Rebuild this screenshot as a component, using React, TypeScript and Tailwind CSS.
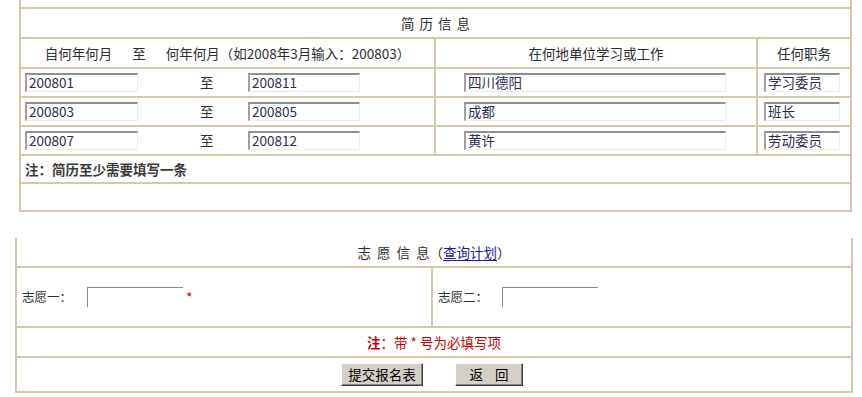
import React from 'react';

const line = 'border-[#d5c9a7]';

function Field({ value, w }: { value: string; w: string }) {
    return (
        <div
            className={`${w} h-[19px] flex items-center pl-[2px] bg-white border-t-2 border-l-2 border-t-[#8f8f8f] border-l-[#a0a0a0] border-b border-r border-b-[#ececec] border-r-[#ececec] text-[13.5px] text-[#2b2a55] leading-none`}
        >
            {value}
        </div>
    );
}

const resume = [
    { from: '200801', to: '200811', place: '四川德阳', role: '学习委员' },
    { from: '200803', to: '200805', place: '成都', role: '班长' },
    { from: '200807', to: '200812', place: '黄许', role: '劳动委员' },
];

export default function App() {
    return (
        <div className="w-[862px] h-[397px] bg-white text-[13.5px] text-[#2e2e2e] font-['Noto_Sans_CJK_SC',sans-serif] overflow-hidden">
            {/* 简历信息 */}
            <div className={`ml-[19px] w-[833px] border-l-2 border-r-2 border-b-2 ${line}`}>
                <div className={`h-[9px] border-b-2 ${line}`} />
                <div className={`h-[30px] flex items-center justify-center gap-[5px] border-b-2 ${line}`}>
                    <span>简</span>
                    <span>历</span>
                    <span>信</span>
                    <span>息</span>
                </div>
                <div className={`h-[30px] flex border-b-2 ${line}`}>
                    <div className={`w-[415px] flex items-center justify-center gap-[20px] border-r-2 ${line}`}>
                        <span>自何年何月</span>
                        <span>至</span>
                        <span>何年何月（如2008年3月输入：200803）</span>
                    </div>
                    <div className={`w-[322px] flex items-center justify-center border-r-2 ${line}`}>在何地单位学习或工作</div>
                    <div className="flex-1 flex items-center justify-center">任何职务</div>
                </div>
                {resume.map((r) => (
                    <div key={r.from} className={`h-[29px] flex border-b-2 ${line}`}>
                        <div className={`w-[415px] flex items-center pl-[4px] border-r-2 ${line}`}>
                            <Field value={r.from} w="w-[113px]" />
                            <span className="ml-[62px] w-[14px]">至</span>
                            <span className="ml-[34px]">
                                <Field value={r.to} w="w-[112px]" />
                            </span>
                        </div>
                        <div className={`w-[322px] flex items-center pl-[28px] border-r-2 ${line}`}>
                            <Field value={r.place} w="w-[262px]" />
                        </div>
                        <div className="flex-1 flex items-center pl-[6px]">
                            <Field value={r.role} w="w-[76px]" />
                        </div>
                    </div>
                ))}
                <div className={`h-[28px] flex items-center pl-[4px] font-bold text-[#3a3a3a] border-b-2 ${line}`}>
                    注：简历至少需要填写一条
                </div>
                <div className="h-[26px]" />
            </div>

            {/* 志愿信息 */}
            <div className={`mt-[26px] ml-[15px] w-[838px] border-l-2 border-r-2 border-b-2 ${line}`}>
                <div className={`h-[30px] flex items-center justify-center border-b-2 ${line}`}>
                    <div className="flex gap-[6px]">
                        <span>志</span>
                        <span>愿</span>
                        <span>信</span>
                        <span>息</span>
                    </div>
                    <span>（</span>
                    <span className="text-[#1a1aa6] underline underline-offset-2">查询计划</span>
                    <span>）</span>
                </div>
                <div className={`h-[60px] flex border-b-2 ${line} text-[12.5px]`}>
                    <div className={`w-[416px] flex items-center pl-[5px] border-r-2 ${line}`}>
                        <span>志愿一：</span>
                        <div className="ml-[15px] w-[96px] h-[20px] border-t border-l border-t-[#888] border-l-[#888] bg-white" />
                        <span className="ml-[3px] text-[#dd0000] text-[14px]">*</span>
                    </div>
                    <div className="flex-1 flex items-center pl-[5px]">
                        <span>志愿二：</span>
                        <div className="ml-[14px] w-[96px] h-[20px] border-t border-l border-t-[#888] border-l-[#888] bg-white" />
                    </div>
                </div>
                <div className={`h-[30px] flex items-center justify-center text-[#cc0000] border-b-2 ${line}`}>
                    <span className="font-bold">注</span>
                    <span>：带 * 号为必填写项</span>
                </div>
                <div className="h-[33px] flex items-center justify-center gap-[32px]">
                    <button className="ml-[-4px] w-[82px] h-[23px] bg-[#d4d0c8] border border-t-white border-l-white border-b-[#404040] border-r-[#404040] shadow-[inset_-1px_-1px_0_#808080] text-[13.5px] text-black">
                        提交报名表
                    </button>
                    <button className="w-[68px] h-[23px] bg-[#d4d0c8] border border-t-white border-l-white border-b-[#404040] border-r-[#404040] shadow-[inset_-1px_-1px_0_#808080] text-[13.5px] text-black tracking-[0.9em] pl-[0.9em]">
                        返回
                    </button>
                </div>
            </div>
        </div>
    );
}
